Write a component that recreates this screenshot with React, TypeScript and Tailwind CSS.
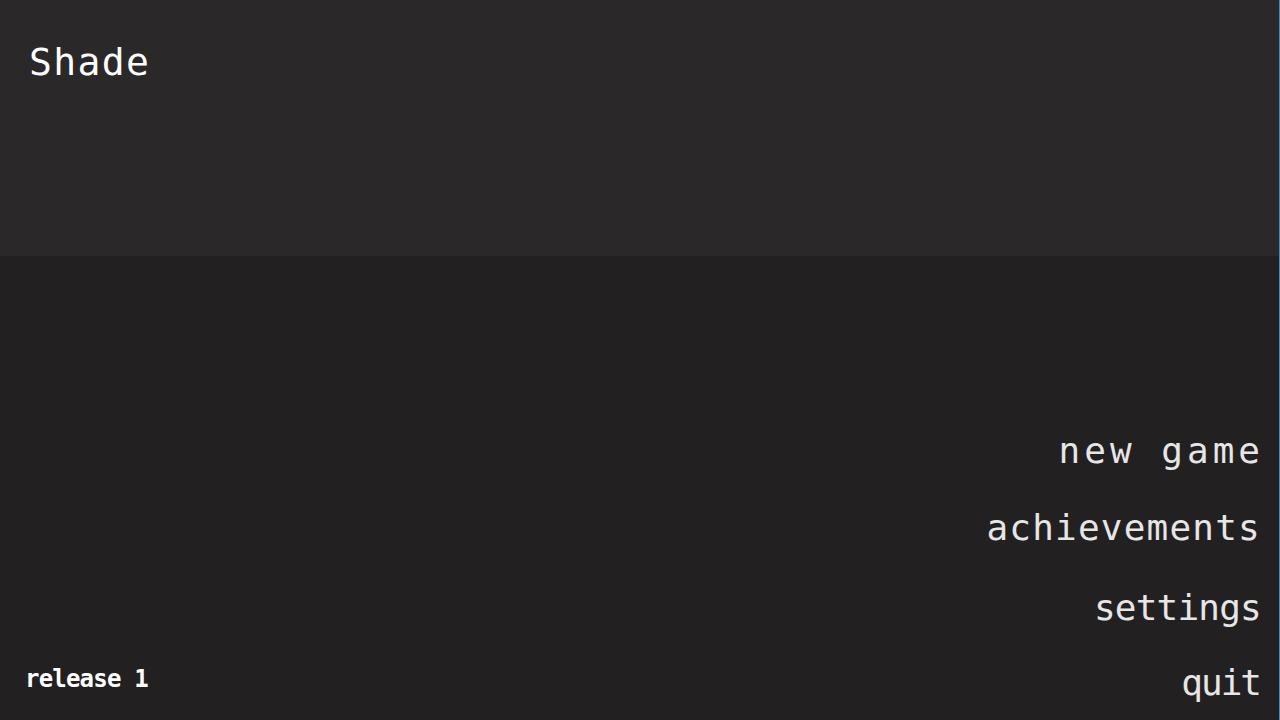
export default function App() {
  return (
    <div
      className="flex h-screen w-full flex-col overflow-hidden border-r border-[#4a86c6] bg-[#232022] text-white"
      style={{ fontFamily: '"DejaVu Sans Mono", "Liberation Mono", monospace' }}
    >
      {/* Title bar */}
      <div className="h-[256px] shrink-0 bg-[#2b282a] pl-[29px] pt-[43px]">
        <h1 className="text-[38px] leading-none tracking-[1.4px] text-white">Shade</h1>
      </div>

      {/* Main area */}
      <div className="flex flex-1 items-end justify-between">
        <div className="pb-[29px] pl-[25px] text-[24px] font-bold leading-none tracking-[-0.8px] text-white">
          release 1
        </div>
        <nav className="flex flex-col items-end pb-[19px] pr-[18px] text-[36px] leading-none tracking-[1.2px] text-[#e6e6e6]">
          <button className="-mr-[3px] leading-none tracking-[4px]">new game</button>
          <button className="mt-[41px] leading-none">achievements</button>
          <button className="mt-[44px] leading-none tracking-[-0.8px]">settings</button>
          <button className="mr-[1px] mt-[39px] leading-none tracking-[-2px]">quit</button>
        </nav>
      </div>
    </div>
  );
}
